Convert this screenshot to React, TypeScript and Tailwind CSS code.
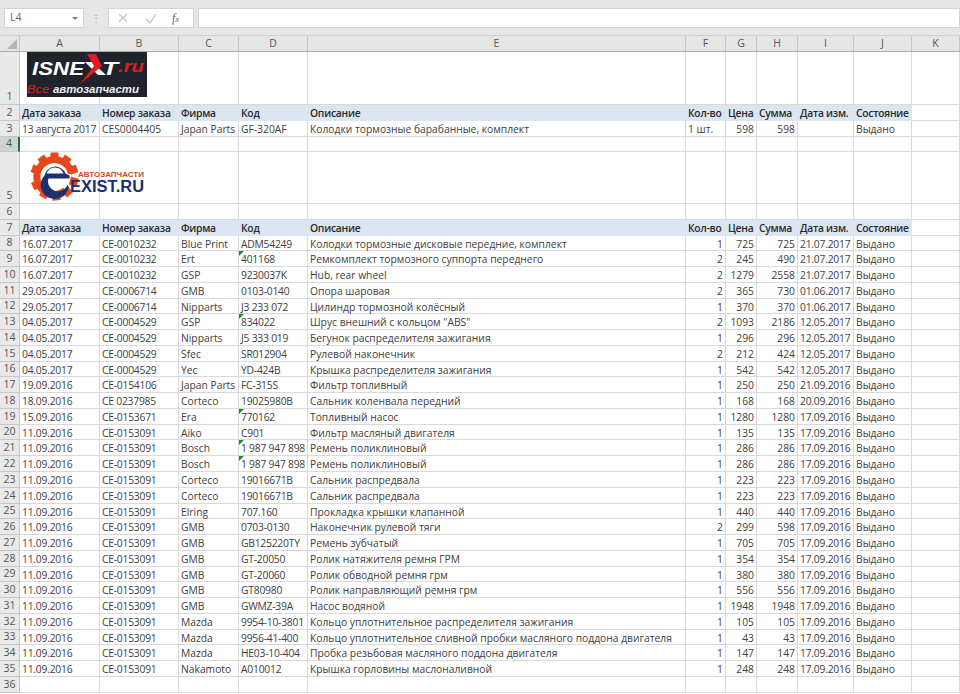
import { ReactNode } from "react";

const COLS = [
  "w-[80px]",
  "w-[79px]",
  "w-[60px]",
  "w-[69px]",
  "w-[378px]",
  "w-[40px]",
  "w-[31px]",
  "w-[41px]",
  "w-[56px]",
  "w-[58px]",
  "w-[48px]",
];
const LETTERS = ["A", "B", "C", "D", "E", "F", "G", "H", "I", "J", "K"];
const HEAD = ["Дата заказа", "Номер заказа", "Фирма", "Код", "Описание", "Кол-во", "Цена", "Сумма", "Дата изм.", "Состояние"];

type Order = [string, string, string, string, string, number, number, number, string];

const BOSCH: Order = ["11.09.2016", "CE-0153091", "Bosch", "1 987 947 898", "Ремень поликлиновый", 1, 286, 286, "17.09.2016"];
const CORTECO: Order = ["11.09.2016", "CE-0153091", "Corteco", "19016671B", "Сальник распредвала", 1, 223, 223, "17.09.2016"];

const ORDERS: Order[] = [
  ["16.07.2017", "CE-0010232", "Blue Print", "ADM54249", "Колодки тормозные дисковые передние, комплект", 1, 725, 725, "21.07.2017"],
  ["16.07.2017", "CE-0010232", "Ert", "401168", "Ремкомплект тормозного суппорта переднего", 2, 245, 490, "21.07.2017"],
  ["16.07.2017", "CE-0010232", "GSP", "9230037K", "Hub, rear wheel", 2, 1279, 2558, "21.07.2017"],
  ["29.05.2017", "CE-0006714", "GMB", "0103-0140", "Опора шаровая", 2, 365, 730, "01.06.2017"],
  ["29.05.2017", "CE-0006714", "Nipparts", "J3 233 072", "Цилиндр тормозной колёсный", 1, 370, 370, "01.06.2017"],
  ["04.05.2017", "CE-0004529", "GSP", "834022", 'Шрус внешний с кольцом "ABS"', 2, 1093, 2186, "12.05.2017"],
  ["04.05.2017", "CE-0004529", "Nipparts", "J5 333 019", "Бегунок распределителя зажигания", 1, 296, 296, "12.05.2017"],
  ["04.05.2017", "CE-0004529", "Sfec", "SR012904", "Рулевой наконечник", 2, 212, 424, "12.05.2017"],
  ["04.05.2017", "CE-0004529", "Yec", "YD-424B", "Крышка распределителя зажигания", 1, 542, 542, "12.05.2017"],
  ["19.09.2016", "CE-0154106", "Japan Parts", "FC-315S", "Фильтр топливный", 1, 250, 250, "21.09.2016"],
  ["18.09.2016", "CE 0237985", "Corteco", "19025980B", "Сальник коленвала передний", 1, 168, 168, "20.09.2016"],
  ["15.09.2016", "CE-0153671", "Era", "770162", "Топливный насос", 1, 1280, 1280, "17.09.2016"],
  ["11.09.2016", "CE-0153091", "Aiko", "C901", "Фильтр масляный двигателя", 1, 135, 135, "17.09.2016"],
  BOSCH,
  BOSCH,
  CORTECO,
  CORTECO,
  ["11.09.2016", "CE-0153091", "Elring", "707.160", "Прокладка крышки клапанной", 1, 440, 440, "17.09.2016"],
  ["11.09.2016", "CE-0153091", "GMB", "0703-0130", "Наконечник рулевой тяги", 2, 299, 598, "17.09.2016"],
  ["11.09.2016", "CE-0153091", "GMB", "GB125220TY", "Ремень зубчатый", 1, 705, 705, "17.09.2016"],
  ["11.09.2016", "CE-0153091", "GMB", "GT-20050", "Ролик натяжителя ремня ГРМ", 1, 354, 354, "17.09.2016"],
  ["11.09.2016", "CE-0153091", "GMB", "GT-20060", "Ролик обводной ремня грм", 1, 380, 380, "17.09.2016"],
  ["11.09.2016", "CE-0153091", "GMB", "GT80980", "Ролик направляющий ремня грм", 1, 556, 556, "17.09.2016"],
  ["11.09.2016", "CE-0153091", "GMB", "GWMZ-39A", "Насос водяной", 1, 1948, 1948, "17.09.2016"],
  ["11.09.2016", "CE-0153091", "Mazda", "9954-10-3801", "Кольцо уплотнительное распределителя зажигания", 1, 105, 105, "17.09.2016"],
  ["11.09.2016", "CE-0153091", "Mazda", "9956-41-400", "Кольцо уплотнительное сливной пробки масляного поддона двигателя", 1, 43, 43, "17.09.2016"],
  ["11.09.2016", "CE-0153091", "Mazda", "HE03-10-404", "Пробка резьбовая масляного поддона двигателя", 1, 147, 147, "17.09.2016"],
  ["11.09.2016", "CE-0153091", "Nakamoto", "A010012", "Крышка горловины маслоналивной", 1, 248, 248, "17.09.2016"],
];

// codes stored as text get the little green corner
const FLAGGED = ["401168", "834022", "770162", "1 987 947 898"];

function RowNum({ n, active }: { n: number; active?: boolean }) {
  return (
    <div
      className={`w-[20px] shrink-0 flex items-end justify-center border-r border-b border-[#c6c6c6] text-[10.5px] leading-[15px] text-[#555] ${
        active ? "bg-[#d2d2d2] border-r-2 border-r-[#217346] text-[#217346]" : "bg-[#e9e9e9]"
      }`}
    >
      {n}
    </div>
  );
}

function Cell({ col, right, flag, fill, bold, tight, children }: { col: number; right?: boolean; flag?: boolean; fill?: boolean; bold?: boolean; tight?: boolean; children?: ReactNode }) {
  return (
    <div
      className={`${COLS[col]} shrink-0 relative whitespace-nowrap px-[2px] text-[10.3px] leading-[16px] border-r border-b ${
        fill ? "bg-[#dce6f1] border-[#dce6f1]" : "border-[#d9d9d9]"
      } ${bold ? "font-semibold text-[#2a2a2a] tracking-[-0.25px]" : "text-[#404040]"} ${right ? "text-right" : ""} ${tight ? "tracking-[-0.22px]" : ""}`}
    >
      {flag && (
        <span className="absolute left-0 top-0 w-0 h-0 border-t-[5px] border-r-[5px] border-t-[#1e8a3c] border-r-transparent" />
      )}
      {children}
    </div>
  );
}

function Row({ n, height, active, children }: { n: number; height?: string; active?: boolean; children?: ReactNode }) {
  return (
    <div className={`flex ${height ?? "h-[15.77px]"}`}>
      <RowNum n={n} active={active} />
      {children ?? COLS.map((c, i) => <Cell key={c} col={i} />)}
    </div>
  );
}

function HeaderRow({ n }: { n: number }) {
  return (
    <Row n={n}>
      {HEAD.map((h, i) => (
        <Cell key={h} col={i} fill bold>
          {h}
        </Cell>
      ))}
      <Cell col={10} />
    </Row>
  );
}

function IsnextLogo() {
  const sans = "Liberation Sans";
  return (
    <svg width="120" height="45" viewBox="0 0 120 45" className="absolute left-[7px] top-0">
      <rect width="120" height="45" fill="#20232b" />
      <text x="5" y="23" fontFamily={sans} fontSize="18" fontWeight="bold" fontStyle="italic" fill="#fff" textLength="52" lengthAdjust="spacingAndGlyphs">
        ISNE
      </text>
      <path d="M58 10 L65 10 L79 23 L71 23 Z" fill="#fff" />
      <path d="M60 2 L69 2 L75 14 L52 33 L67 14 Z" fill="#e01b22" />
      <text x="75" y="23" fontFamily={sans} fontSize="18" fontWeight="bold" fontStyle="italic" fill="#fff" textLength="16" lengthAdjust="spacingAndGlyphs">
        T
      </text>
      <text x="91" y="20" fontFamily={sans} fontSize="16" fontWeight="bold" fontStyle="italic" fill="#e01b22" textLength="26" lengthAdjust="spacingAndGlyphs">
        .ru
      </text>
      <text x="0" y="41" fontFamily={sans} fontSize="11.5" fontStyle="italic" fill="#e01b22" textLength="22" lengthAdjust="spacingAndGlyphs">
        Все
      </text>
      <text x="26" y="41" fontFamily={sans} fontSize="11.5" fontStyle="italic" fontWeight="bold" fill="#eee" textLength="86" lengthAdjust="spacingAndGlyphs">
        автозапчасти
      </text>
    </svg>
  );
}

function ExistLogo() {
  const teeth = [-70, -35, 0, 35, 70, 105, 140, 175, 210, 245];
  return (
    <svg width="122" height="50" viewBox="0 2 122 50" className="absolute left-[6px] top-0">
      <g transform="translate(28.5 26.5)">
        {teeth.map((a) => (
          <rect key={a} x="-4" y="-24" width="8" height="8" fill="#e8471b" transform={`rotate(${a})`} />
        ))}
        <path d="M17 -3 A17.5 17.5 0 1 0 11 14" fill="none" stroke="#e8471b" strokeWidth="7" />
        <path
          d="M-10 -1 A11 11 0 0 1 11 -3 L15 -1 L15 2 L-6 2 A8 8 0 0 0 13 8 L14 11 A14 14 0 1 1 -10 -1 Z"
          fill="#1c2f6e"
        />
        <path d="M-8 -3 L9 -3 A9 9 0 0 0 -8 -3 Z" fill="#fff" />
      </g>
      <text x="52" y="27" fontFamily="Liberation Sans" fontSize="6.6" fontWeight="bold" fill="#d8452a" textLength="66" lengthAdjust="spacingAndGlyphs">
        АВТОЗАПЧАСТИ
      </text>
      <text x="44" y="41.5" fontFamily="Liberation Sans" fontSize="16" fontWeight="bold" fill="#1c2f6e" textLength="74" lengthAdjust="spacingAndGlyphs">
        EXIST.RU
      </text>
    </svg>
  );
}

function FormulaBar() {
  return (
    <div className="h-[36px] bg-[#e6e6e6] flex items-start pt-[8px] pl-[4px] border-b border-[#d0d0d0]">
      <div className="w-[80px] h-[20px] bg-white border border-[#d4d4d4] flex items-center justify-between pl-[5px] pr-[5px] text-[10.5px] text-[#666]">
        L4
        <span className="w-0 h-0 border-l-[3px] border-r-[3px] border-t-[3px] border-l-transparent border-r-transparent border-t-[#777]" />
      </div>
      <div className="w-[24px] h-[20px] flex items-center justify-center text-[#999] text-[10px] leading-none">⋮</div>
      <div className="w-[86px] h-[20px] bg-white border border-[#d4d4d4] flex items-center">
        <svg width="14" height="14" viewBox="0 0 14 14" className="ml-[7px]" stroke="#c4c4c4" strokeWidth="1.3" fill="none">
          <path d="M3 3 L11 11 M11 3 L3 11" />
        </svg>
        <svg width="14" height="14" viewBox="0 0 14 14" className="ml-[14px]" stroke="#c4c4c4" strokeWidth="1.3" fill="none">
          <path d="M2 8 L6 12 L12 3" />
        </svg>
        <span className="ml-[14px] text-[12px] leading-none italic text-[#666] [font-family:'Liberation_Serif',serif]">
          f<span className="text-[9px]">x</span>
        </span>
      </div>
      <div className="ml-[4px] flex-1 h-[20px] bg-white border border-[#d4d4d4]" />
    </div>
  );
}

function ColumnHeads() {
  return (
    <div className="flex h-[16px] bg-[#e6e6e6] border-b border-[#adadad]">
      <div className="w-[20px] shrink-0 border-r border-[#c6c6c6] relative overflow-hidden">
        <span className="absolute right-[2px] bottom-[2px] w-0 h-0 border-b-[10px] border-l-[10px] border-b-[#b5b5b5] border-l-transparent" />
      </div>
      {COLS.map((c, i) => (
        <div key={c} className={`${c} shrink-0 border-r border-[#c6c6c6] text-center text-[10.5px] leading-[15px] text-[#555]`}>
          {LETTERS[i]}
        </div>
      ))}
    </div>
  );
}

export default function App() {
  return (
    <div className="w-[960px] h-[694px] overflow-hidden bg-white [font-family:'Open_Sans',sans-serif]">
      <FormulaBar />
      <ColumnHeads />
      <Row n={1} height="h-[53px]">
        <Cell col={0}>
          <IsnextLogo />
        </Cell>
        {COLS.slice(1).map((c, i) => <Cell key={c} col={i + 1} />)}
      </Row>
      <HeaderRow n={2} />
      <Row n={3}>
        <Cell col={0} tight>13 августа 2017</Cell>
        <Cell col={1}>CES0004405</Cell>
        <Cell col={2}>Japan Parts</Cell>
        <Cell col={3}>GF-320AF</Cell>
        <Cell col={4}>Колодки тормозные барабанные, комплект</Cell>
        <Cell col={5}>1 шт.</Cell>
        <Cell col={6} right>598</Cell>
        <Cell col={7} right>598</Cell>
        <Cell col={8} />
        <Cell col={9}>Выдано</Cell>
        <Cell col={10} />
      </Row>
      <Row n={4} active />
      <Row n={5} height="h-[51.7px]">
        <Cell col={0}>
          <ExistLogo />
        </Cell>
        {COLS.slice(1).map((c, i) => <Cell key={c} col={i + 1} />)}
      </Row>
      <Row n={6} />
      <HeaderRow n={7} />
      {ORDERS.map((o, i) => (
        <Row key={i} n={i + 8}>
          <Cell col={0} tight>{o[0]}</Cell>
          <Cell col={1} tight>{o[1]}</Cell>
          <Cell col={2}>{o[2]}</Cell>
          <Cell col={3} tight flag={FLAGGED.includes(o[3])}>{o[3]}</Cell>
          <Cell col={4}>{o[4]}</Cell>
          <Cell col={5} right>{o[5]}</Cell>
          <Cell col={6} right>{o[6]}</Cell>
          <Cell col={7} right>{o[7]}</Cell>
          <Cell col={8} tight>{o[8]}</Cell>
          <Cell col={9}>Выдано</Cell>
          <Cell col={10} />
        </Row>
      ))}
      <Row n={36} />
    </div>
  );
}
